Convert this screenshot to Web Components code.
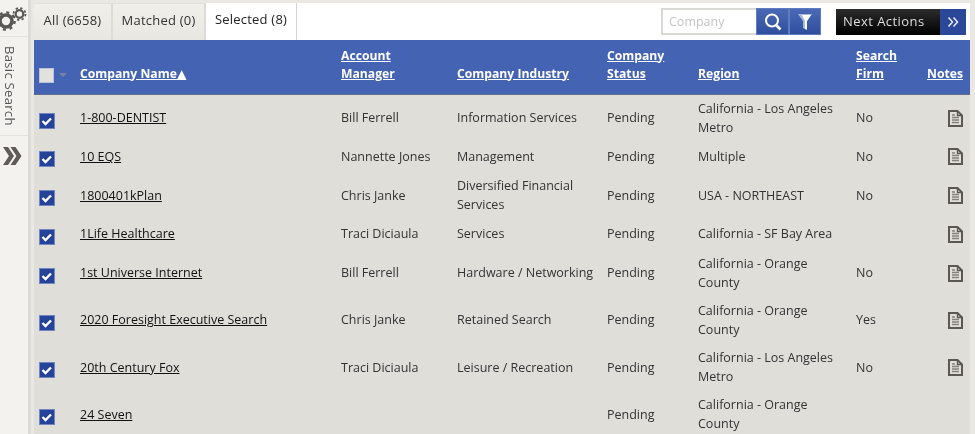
<!DOCTYPE html>
<html><head><meta charset="utf-8"><title>Companies</title>
<style>
html,body{margin:0;padding:0;height:434px;overflow:hidden;background:#e9e8e3;font-family:"Open Sans","DejaVu Sans",sans-serif}
</style></head><body>
<x-app>
  <x-sidebar slot="side" label="Basic Search"></x-sidebar>
  <x-tabs slot="tabs">
    <x-tab style="width:79px">All (6658)</x-tab>
    <x-tab style="width:93px">Matched (0)</x-tab>
    <x-tab style="width:91px" active>Selected (8)</x-tab>
  </x-tabs>
  <x-toolbar slot="tools"></x-toolbar>
  <x-grid slot="grid"></x-grid>
</x-app>
<script>
function def(name, css, html){
  customElements.define(name, class extends HTMLElement{
    constructor(){super();const r=this.attachShadow({mode:'open'});r.innerHTML='<style>'+css+'</style>'+(typeof html==='function'?html(this):html);}
  });
}
const FF='font-family:"Open Sans","DejaVu Sans",sans-serif;';
const FONT=FF+'font-size:12.5px;letter-spacing:0;';
const TAB=FF+'font-size:13px;letter-spacing:.22px;';
def('x-app',`
:host{display:grid;grid-template-columns:31px 1fr;width:975px;height:434px;overflow:hidden;filter:blur(.3px)}
.side{grid-row:1;grid-column:1;background:#f3f2ee;border-right:3px solid #dcdbd6;box-sizing:border-box;width:31px}
.main{grid-column:2;padding:3px 5px 0 3px;min-width:0;display:flex;flex-direction:column}
.top{display:flex;align-items:flex-start;justify-content:space-between;background:#fff;height:37px;flex:none}
`,`<div class="side"><slot name="side"></slot></div>
<div class="main"><div class="top"><slot name="tabs"></slot><slot name="tools"></slot></div><slot name="grid"></slot></div>`);

def('x-sidebar',`
:host{display:flex;flex-direction:column;height:434px;color:#555}
.gear{height:37px;box-sizing:border-box;overflow:hidden;border-bottom:1px solid #e2e1dc;display:flex;align-items:flex-start}
.search{height:99px;box-sizing:border-box;border-bottom:1px solid #e2e1dc;display:flex;justify-content:flex-start;padding:9px 0 0 0}
.search span{writing-mode:vertical-rl;${TAB}letter-spacing:.32px;color:#555;line-height:20px;width:20px}
.chev{display:flex;padding:10px 0 0 2px}
`,el=>`<div class="gear"><svg width="28" height="36" viewBox="0 0 28 36">
<g fill="none" stroke="#5a5855">
<circle cx="6" cy="21" r="6" stroke-width="3.600"/><circle cx="6" cy="21" r="8.600" stroke-width="2.400" stroke-dasharray="3 3.750"/>
<circle cx="19.500" cy="14" r="3.800" stroke-width="2.200"/><circle cx="19.500" cy="14" r="6" stroke-width="1.800" stroke-dasharray="2.300 2.420"/>
</g></svg></div>
<div class="search"><span>${el.getAttribute('label')}</span></div>
<div class="chev"><svg width="20" height="20" viewBox="0 0 20 20"><path d="M1 1h5l6 9-6 9H1l6-9zM8.500 1h5l6 9-6 9h-5l6-9z" fill="#5f5c58"/></svg></div>`);

def('x-tabs',`:host{display:flex;height:37px;background:#fff}`,`<slot></slot>`);
def('x-tab',`
:host{display:block;box-sizing:border-box;height:37px;text-align:center;line-height:33px;${TAB}color:#333;background:linear-gradient(#f0efea,#e8e7e1);border-right:2px solid #dcdbd6;border-top:1px solid #e3e2dd}
:host([active]){background:#fff;color:#222;border-right:1px solid #d5d4cf;border-top:0}
`,`<slot></slot>`);

def('x-toolbar',`
:host{display:flex;align-items:center;height:27px;margin-top:5px;padding-right:4px}
input{box-sizing:border-box;width:95px;height:27px;border:2px solid #d8d8d4;border-right:0;padding:0 6px;${FONT}background:#fff;outline:0}
input::placeholder{color:#c4c4c4;opacity:1}
.b{box-sizing:border-box;height:27px;background:linear-gradient(#4a69b5,#2f4e9e);display:flex;align-items:center;justify-content:center;border:1px solid #5f7cc0}
.next{display:flex;height:26px;margin-left:15px;color:#ddd;${TAB}letter-spacing:.45px}
.next span{background:linear-gradient(#2c2c2c,#000);width:104px;line-height:25px;padding-left:7px;box-sizing:border-box}
.next i{background:#2a4897;width:26px;display:flex;align-items:center;justify-content:center}
`,`<input placeholder="Company" aria-label="Company">
<div class="b" style="width:33px"><svg width="20" height="20" viewBox="0 0 20 20"><circle cx="9" cy="8.500" r="6" fill="none" stroke="#fff" stroke-width="2"/><path d="M13 13l4.500 4.500" stroke="#fff" stroke-width="2.600"/></svg></div>
<div class="b" style="width:32px"><svg width="16" height="18" viewBox="0 0 16 18"><path d="M1 1h14l-5 7v9l-4-2V8z" fill="#aab8d8"/><path d="M5 2l3 6v8l2 .5V8l4-6z" fill="#fff"/></svg></div>
<div class="next"><span>Next Actions</span><i><svg width="12" height="12" viewBox="0 0 12 12"><path d="M1.500 1.500L5.500 6l-4 4.500M6.500 1.500l4 4.500-4 4.500" fill="none" stroke="#e8ecf5" stroke-width="1.500"/></svg></i></div>`);

const rows=[
["1-800-DENTIST","Bill Ferrell","Information Services","Pending","California - Los Angeles Metro","No",1,1],
["10 EQS","Nannette Jones","Management","Pending","Multiple","No",1,0],
["1800401kPlan","Chris Janke","Diversified Financial Services","Pending","USA - NORTHEAST","No",1,1],
["1Life Healthcare","Traci Diciaula","Services","Pending","California - SF Bay Area","",1,0],
["1st Universe Internet","Bill Ferrell","Hardware / Networking","Pending","California - Orange County","No",1,1],
["2020 Foresight Executive Search","Chris Janke","Retained Search","Pending","California - Orange County","Yes",1,1],
["20th Century Fox","Traci Diciaula","Leisure / Recreation","Pending","California - Los Angeles Metro","No",1,1],
["24 Seven","","","Pending","California - Orange County","",0,1]];
const doc=`<svg width="15" height="17" viewBox="0 0 15 17"><path d="M1 1h8.500L14 5.500V16H1z" fill="#dfded9" stroke="#5a5754" stroke-width="2"/><path d="M9.500 1v4.500H14" fill="none" stroke="#5a5754" stroke-width="1.400"/><path d="M4 5h3M4 7.500h7M4 10h7M4 12.500h7" stroke="#85827e" stroke-width="1.300"/></svg>`;
const check=`<svg width="16" height="16" viewBox="0 0 16 16"><rect x=".5" y=".5" width="15" height="15" fill="#26439a" stroke="#6f86c0"/><path d="M3.500 8l3 3 5.500-5.500" fill="none" stroke="#fff" stroke-width="2.400"/></svg>`;
def('x-grid',`
:host{display:block;width:936px;${FONT}color:#333;background:#dfded9}
table{border-collapse:collapse;table-layout:fixed;width:936px}
th{background:#4463b2;color:#fff;text-align:left;vertical-align:bottom;padding:0 0 11px;height:54px;box-sizing:border-box;line-height:18px;font-weight:700;font-size:12.2px;border-bottom:1px solid #5f6f8e}
th.w{padding-right:40px}
th a{color:#fff;text-decoration:underline}
td{padding:0;line-height:19px;vertical-align:middle}
td.r{padding-right:12px}
tr.two{height:47.200px} tr.one{height:30.400px}
td a{color:#111;text-decoration:underline}
.c{padding-left:5px}
td.c svg{display:block;margin-top:6px}
th .hc{display:flex;align-items:center;gap:5px;padding-left:5px}
.box{width:15px;height:15px;background:#e2e1dd;border:1px solid #b9c3dc;box-sizing:border-box;display:block}
.tri{width:0;height:0;border:4px solid transparent;border-top:4px solid #7b82a0;border-bottom:0}
td.n{padding-left:21px}td.n svg{display:block;margin-top:1px}
`,()=>`<table><colgroup><col style="width:46px"><col style="width:261px"><col style="width:116px"><col style="width:150px"><col style="width:91px"><col style="width:158px"><col style="width:71px"><col style="width:43px"></colgroup>
<thead><tr><th><div class="hc"><span class="box"></span><span class="tri"></span></div></th><th><a href="#">Company Name▲</a></th><th class="w"><a href="#">Account Manager</a></th><th><a href="#">Company Industry</a></th><th class="w"><a href="#">Company Status</a></th><th><a href="#">Region</a></th><th class="w"><a href="#">Search Firm</a></th><th><a href="#">Notes</a></th></tr></thead>
<tbody>${rows.map(r=>`<tr class="${r[7]?'two':'one'}"><td class="c">${check}</td><td><a href="#">${r[0]}</a></td><td>${r[1]}</td><td>${r[2]}</td><td>${r[3]}</td><td class="r">${r[4]}</td><td>${r[5]}</td><td class="n">${r[6]?doc:''}</td></tr>`).join('')}</tbody></table>`);
</script>
</body></html>
